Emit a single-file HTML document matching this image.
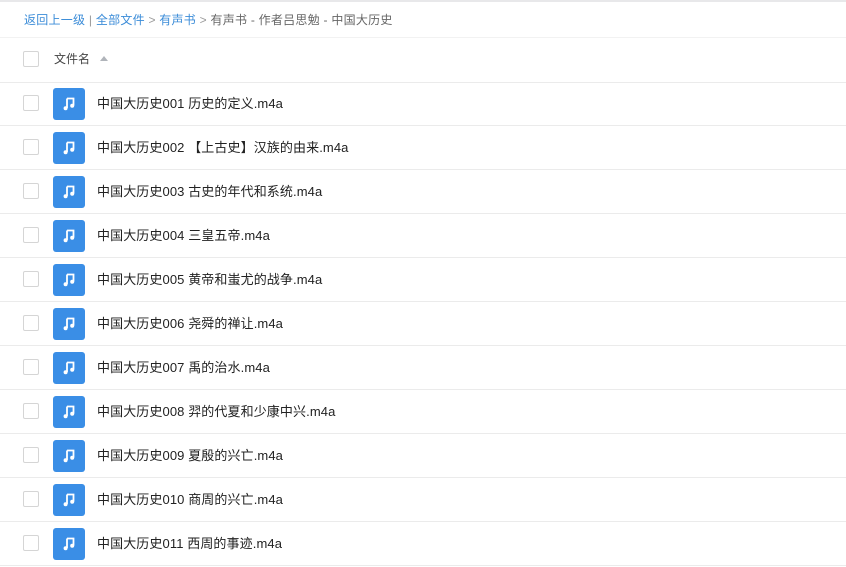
<html><head><style>
body{margin:0;width:846px;height:567px;overflow:hidden;background:#fff;font-family:"Liberation Sans","Noto Sans CJK SC",sans-serif;}
.top{position:absolute;left:0;top:0;width:846px;height:2px;background:#e8e8ea}
.bc{position:absolute;left:24px;top:12px;font-size:12px;color:#666;line-height:16px;letter-spacing:0.25px}
.bc a{color:#3b8cd8;text-decoration:none}
.bc .g{color:#999}
.hd{position:absolute;left:0;top:37px;width:846px;height:44px;border-bottom:1px solid #ebebeb;border-top:1px solid #f2f2f2}
.cb{position:absolute;left:23px;width:14px;height:14px;border:1px solid #d5d5d5;border-radius:2px;background:#fff}
.hd .t{position:absolute;left:54px;top:12px;font-size:12px;color:#444}
.tri{position:absolute;left:100px;top:18px;width:0;height:0;border-left:4px solid transparent;border-right:4px solid transparent;border-bottom:5px solid #b0b4ba}
.row{position:absolute;left:0;width:846px;height:43px;border-bottom:1px solid #ebebeb}
.ic{position:absolute;left:53px;top:6px;width:32px;height:32px;background:#3a8ee6;border-radius:3px}
.nm{position:absolute;left:97px;top:13px;font-size:13px;color:#222;line-height:18px;letter-spacing:0.1px}
</style></head><body>
<div class="top"></div>
<div class="bc"><a>返回上一级</a> <span style="color:#999">|</span> <a>全部文件</a> <span class="g">&gt;</span> <a>有声书</a> <span class="g">&gt;</span> 有声书 - 作者吕思勉 - 中国大历史</div>
<div class="hd"><div class="cb" style="top:13px"></div><div class="t">文件名</div><div class="tri"></div></div>
<div id="rows"></div>
<script>
var n=["中国大历史001 历史的定义.m4a","中国大历史002 【上古史】汉族的由来.m4a","中国大历史003 古史的年代和系统.m4a","中国大历史004 三皇五帝.m4a","中国大历史005 黄帝和蚩尤的战争.m4a","中国大历史006 尧舜的禅让.m4a","中国大历史007 禹的治水.m4a","中国大历史008 羿的代夏和少康中兴.m4a","中国大历史009 夏殷的兴亡.m4a","中国大历史010 商周的兴亡.m4a","中国大历史011 西周的事迹.m4a"];
var h="";
for(var i=0;i<n.length;i++){h+='<div class="row" style="top:'+(82+44*i)+'px"><div class="cb" style="top:13px"></div><div class="ic"><svg width="32" height="32" viewBox="0 0 32 32"><path d="M14 10.5h6.5v7" stroke="#fff" stroke-width="1.8" fill="none"/><path d="M14 10.5v9.5" stroke="#fff" stroke-width="1.8"/><circle cx="12.6" cy="20.3" r="2" fill="#fff"/><circle cx="19.2" cy="17.8" r="2" fill="#fff"/></svg></div><div class="nm">'+n[i]+'</div></div>';}
document.getElementById("rows").innerHTML=h;
</script>
</body></html>
